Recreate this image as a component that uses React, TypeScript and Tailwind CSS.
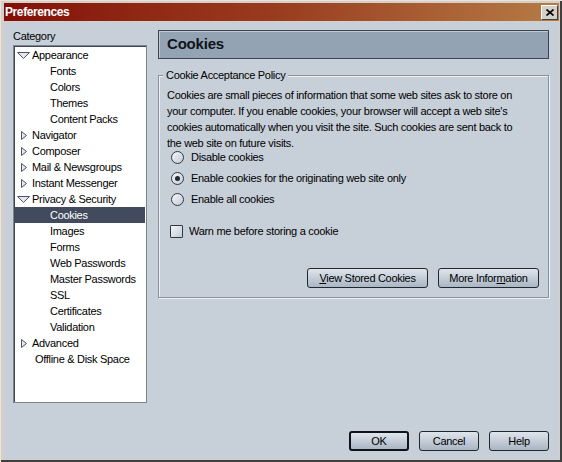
import React from "react";

const font = { fontFamily: '"Liberation Sans", Arial, sans-serif' };

type Row = { label: string; level: 0 | 1 | 2; open?: boolean; selected?: boolean };

const rows: Row[] = [
  { label: "Appearance", level: 0, open: true },
  { label: "Fonts", level: 1 },
  { label: "Colors", level: 1 },
  { label: "Themes", level: 1 },
  { label: "Content Packs", level: 1 },
  { label: "Navigator", level: 0 },
  { label: "Composer", level: 0 },
  { label: "Mail & Newsgroups", level: 0 },
  { label: "Instant Messenger", level: 0 },
  { label: "Privacy & Security", level: 0, open: true },
  { label: "Cookies", level: 1, selected: true },
  { label: "Images", level: 1 },
  { label: "Forms", level: 1 },
  { label: "Web Passwords", level: 1 },
  { label: "Master Passwords", level: 1 },
  { label: "SSL", level: 1 },
  { label: "Certificates", level: 1 },
  { label: "Validation", level: 1 },
  { label: "Advanced", level: 0 },
  { label: "Offline & Disk Space", level: 2 },
];

function Twisty({ open }: { open?: boolean }) {
  return (
    <svg width="13" height="13" viewBox="0 0 13 13" className="shrink-0">
      {open ? (
        <polygon points="0.5,3.5 12.5,3.5 6.5,9.5" fill="#e4e8ee" stroke="#4c5460" strokeWidth="1" />
      ) : (
        <polygon points="4.5,2.5 9.5,6.5 4.5,10.5" fill="#e4e8ee" stroke="#4c5460" strokeWidth="1" />
      )}
    </svg>
  );
}

function Radio({ checked }: { checked?: boolean }) {
  return (
    <div className="w-[13px] h-[13px] rounded-full border border-[#303840] bg-gradient-to-br from-[#f4f6f8] to-[#c4ccd6] flex items-center justify-center shrink-0">
      {checked && <div className="w-[5px] h-[5px] rounded-full bg-[#202830]" />}
    </div>
  );
}

function Btn({ children, w, def }: { children: React.ReactNode; w: string; def?: boolean }) {
  return (
    <div
      className={`${w} h-[20px] rounded-[3px] ${def ? "border-2 border-[#101418]" : "border border-[#202830]"} bg-gradient-to-b from-[#dfe5ec] to-[#aab6c4] flex items-center justify-center text-black`}
    >
      {children}
    </div>
  );
}

export default function App() {
  return (
    <div
      style={font}
      className="w-[562px] h-[462px] bg-[#d4d0c8] border-t border-l border-[#e8e4dc] text-[11px] tracking-[-0.3px] text-black overflow-hidden"
    >
      <div className="w-full h-full border-r-2 border-b-2 border-[#404040] flex flex-col pt-[2px] pl-[3px] pr-[1px] pb-[1px]">
        {/* title bar */}
        <div className="h-[18px] bg-gradient-to-r from-[#840c08] via-[#9a3c20] to-[#b57b45] flex items-center justify-between pl-[1px] pr-[1px]">
          <span className="text-white font-bold text-[12px] tracking-[-0.4px]">Preferences</span>
          <div className="w-[17px] h-[15px] bg-[#d4d0c8] border-t border-l border-white border-r border-b border-r-[#404040] border-b-[#404040] flex items-center justify-center">
            <svg width="8" height="7" viewBox="0 0 8 7">
              <path d="M0.5 0.5 L7.5 6.5 M7.5 0.5 L0.5 6.5" stroke="#000" strokeWidth="1.6" />
            </svg>
          </div>
        </div>
        {/* body */}
        <div className="flex-1 bg-[#c7cfd8] mt-[1px] flex flex-col">
          <div className="flex flex-1 pl-[9px] pr-[10px] pt-[6px]">
            {/* category column */}
            <div className="w-[134px] flex flex-col">
              <div className="h-[16px] leading-[16px]">Category</div>
              <div className="h-[358px] mt-[1px] bg-white border border-[#7c8490] shadow-[inset_1px_1px_0_#404850] pt-[1px] px-[1px]">
                {rows.map((r) => (
                  <div
                    key={r.label}
                    className={`h-[16px] flex items-center ${r.selected ? "bg-[#414b5d] text-white" : ""}`}
                  >
                    {r.level === 0 && (
                      <div className="flex items-center pl-[2px] gap-[2px]">
                        <Twisty open={r.open} />
                        <span>{r.label}</span>
                      </div>
                    )}
                    {r.level === 1 && <span className="pl-[35px]">{r.label}</span>}
                    {r.level === 2 && <span className="pl-[20px]">{r.label}</span>}
                  </div>
                ))}
              </div>
            </div>
            {/* right panel */}
            <div className="flex-1 ml-[11px] flex flex-col">
              <div className="h-[29px] mt-[2px] bg-[#94a3b4] border border-[#3c4450] shadow-[inset_1px_1px_0_#c0c8d0] flex items-center pl-[8px]">
                <span className="font-bold text-[15px] tracking-[-0.2px] text-[#101418]">Cookies</span>
              </div>
              <div className="relative mt-[16px] border border-[#8a929c] shadow-[1px_1px_0_#eef0f4,inset_1px_1px_0_#eef0f4] h-[223px] pt-[11px] pl-[8px] pr-[9px]">
                <span className="absolute -top-[9px] left-[4px] bg-[#c7cfd8] px-[3px] leading-[16px]">
                  Cookie Acceptance Policy
                </span>
                <p className="leading-[16px] whitespace-nowrap">
                  Cookies are small pieces of information that some web sites ask to store on
                  <br />
                  your computer. If you enable cookies, your browser will accept a web site's
                  <br />
                  cookies automatically when you visit the site. Such cookies are sent back to
                  <br />
                  the web site on future visits.
                </p>
                <div className="mt-[-2px] flex flex-col gap-[5px] pl-[4px]">
                  <label className="h-[16px] flex items-center gap-[7px]">
                    <Radio />
                    <span>Disable cookies</span>
                  </label>
                  <label className="h-[16px] flex items-center gap-[7px]">
                    <Radio checked />
                    <span>Enable cookies for the originating web site only</span>
                  </label>
                  <label className="h-[16px] flex items-center gap-[7px]">
                    <Radio />
                    <span>Enable all cookies</span>
                  </label>
                </div>
                <label className="mt-[16px] h-[16px] flex items-center gap-[6px] pl-[3px]">
                  <div className="w-[13px] h-[13px] border border-[#303840] rounded-[1px] bg-gradient-to-br from-[#f4f6f8] to-[#c4ccd6]" />
                  <span>Warn me before storing a cookie</span>
                </label>
                <div className="mt-[29px] flex justify-end gap-[10px]">
                  <Btn w="w-[121px]">
                    <span>
                      <u>V</u>iew Stored Cookies
                    </span>
                  </Btn>
                  <Btn w="w-[101px]">
                    <span>
                      More Infor<u>m</u>ation
                    </span>
                  </Btn>
                </div>
              </div>
            </div>
          </div>
          {/* bottom buttons */}
          <div className="flex justify-end gap-[10px] pr-[10px] pb-[8px]">
            <Btn w="w-[60px]" def>
              OK
            </Btn>
            <Btn w="w-[60px]">Cancel</Btn>
            <Btn w="w-[60px]">Help</Btn>
          </div>
        </div>
      </div>
    </div>
  );
}
